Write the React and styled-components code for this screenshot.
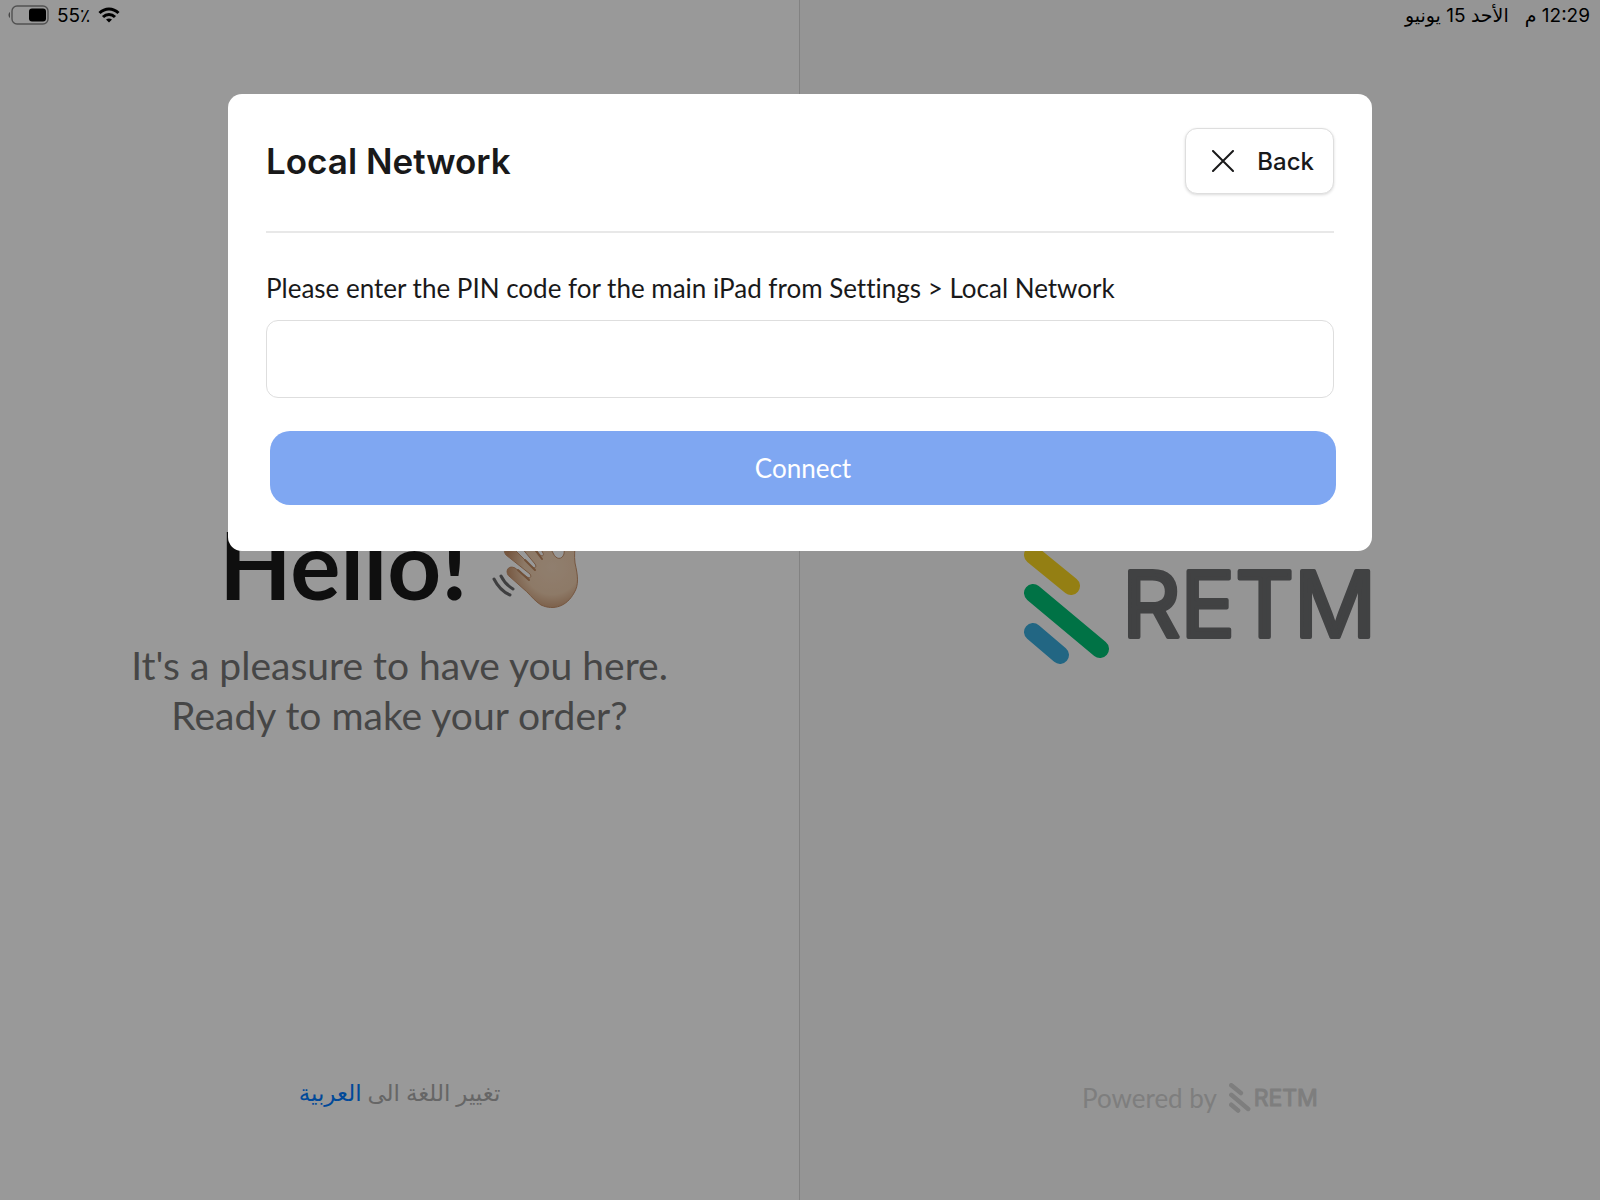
import React, { useState } from "react";
import styled, { createGlobalStyle } from "styled-components";

const GlobalStyle = createGlobalStyle`
	* {
		box-sizing: border-box;
	}
	body {
		margin: 0;
		font-family: Lato, "DejaVu Sans", sans-serif;
		font-variant-ligatures: none;
		color: #19191a;
	}
	h1, h2, p {
		margin: 0;
	}
`;

const Logo = ({ width, mono }) => (
	<svg width={width} viewBox="0 0 353 119" role="img" aria-label="RETM">
		<g fill="none" strokeWidth="18" strokeLinecap="round">
			<path d="M9 9 47 40" stroke={mono || "#f7d421"} />
			<path d="M9 47 76 103" stroke={mono || "#00bf73"} />
			<path d="M9 86 36 109" stroke={mono || "#39abdb"} />
		</g>
		<LogoName x="98" y="91" fill={mono || "#6d6e70"} stroke={mono || "#6d6e70"}>
			RETM
		</LogoName>
	</svg>
);

const WavingHand = () => (
	<svg width="88" height="90" viewBox="0 0 88 90" fill="none" strokeLinecap="round" aria-hidden="true">
		<defs>
			<radialGradient id="skin" gradientUnits="userSpaceOnUse" cx="60" cy="48" r="46">
				<stop offset="0" stopColor="#f0d3b8" />
				<stop offset="0.6" stopColor="#eccbac" />
				<stop offset="1" stopColor="#c4906a" />
			</radialGradient>
		</defs>
		<path
			d="M16 56c-3-5 1-10 7-7l12 9c3 2 5 0 3-3L14 36c-4-5 0-11 6-8l20 20c3 2 5 0 3-3L24 22c-3-6 3-11 8-7l16 21c3 2 4 0 3-2L39 13c-2-6 5-9 9-4l13 25c3 7 9 7 11 1l1-12c1-6 10-5 10 2 0 7-1 11 0 19 3 13 4 22-1 30-7 13-20 18-33 12-6-4-9-8-14-13Z"
			fill="url(#skin)"
			stroke="#c4906a"
		/>
		<path d="m26 51 11 10M33 41l10 10M41 28l9 12" stroke="#bd875f" strokeWidth="2" />
		<path d="M9 57c3 6 7 10 12 13M2 60c4 8 9 13 16 16" stroke="#69696b" strokeWidth="3" />
	</svg>
);

const App = () => {
	const [pin, setPin] = useState("");

	return (
		<Screen>
			<GlobalStyle />
			<Panels>
				<Panel>
					<Welcome>
						<Greeting>
							Hello! <WavingHand />
						</Greeting>
						<Subtitle>
							It's a pleasure to have you here.
							<br />
							Ready to make your order?
						</Subtitle>
					</Welcome>
					<Language dir="rtl">
						تغيير اللغة الى <a href="#ar">العربية</a>
					</Language>
				</Panel>
				<Panel $tinted>
					<Brand>
						<Logo width="353" />
					</Brand>
					<Powered>
						Powered by <Logo width="89" mono="#d2d2d2" />
					</Powered>
				</Panel>
			</Panels>

			<StatusBar dir="rtl">
				<StatusGroup>
					<span>12:29 م</span>
					<span>الأحد 15 يونيو</span>
				</StatusGroup>
				<StatusGroup dir="ltr" $tight>
					<svg width="41" height="20" viewBox="0 0 41 20" aria-hidden="true">
						<path d="M2 7v6C0 12 0 8 2 7Z" fill="#777" />
						<rect x="4" y="1" width="36" height="18" rx="5" fill="none" stroke="#888" strokeWidth="1.4" />
						<rect x="21" y="3.5" width="17" height="13" rx="3" fill="#000" />
					</svg>
					<span>55٪</span>
					<svg width="22" height="16" viewBox="0 0 22 16" fill="none" stroke="#000" strokeWidth="3" aria-hidden="true">
						<path d="M1.5 6C7 .5 15 .5 20.5 6" />
						<path d="M5 10c3.5-3.5 8.5-3.5 12 0" />
						<path d="m11 15.5-3-3c2-1.500 4-1.500 6 0Z" fill="#000" stroke="none" />
					</svg>
				</StatusGroup>
			</StatusBar>

			<Scrim>
				<Modal role="dialog" aria-labelledby="title">
					<ModalHeader>
						<Title id="title">Local Network</Title>
						<BackButton type="button">
							<svg width="22" height="22" viewBox="0 0 22 22" stroke="#19191a" strokeWidth="2" strokeLinecap="round" aria-hidden="true">
								<path d="m1 1 20 20M21 1 1 21" />
							</svg>
							Back
						</BackButton>
					</ModalHeader>
					<form onSubmit={(e) => e.preventDefault()}>
						<Label htmlFor="pin">Please enter the PIN code for the main iPad from Settings &gt; Local Network</Label>
						<PinInput id="pin" value={pin} onChange={(e) => setPin(e.target.value)} />
						<ConnectButton type="submit">Connect</ConnectButton>
					</form>
				</Modal>
			</Scrim>
		</Screen>
	);
};

const Screen = styled.div`
	position: relative;
	min-height: 100vh;
	display: flex;
	flex-direction: column;
	background: #fff;
`;

const StatusBar = styled.header`
	position: absolute;
	top: 0;
	left: 0;
	right: 0;
	display: flex;
	justify-content: space-between;
	align-items: center;
	height: 30px;
	padding: 0 10px 0 8px;
	font: 400 19px Inter, "DejaVu Sans", sans-serif;
	color: #000;
`;

const StatusGroup = styled.div`
	display: flex;
	align-items: center;
	gap: ${(p) => (p.$tight ? "8px" : "16px")};
`;

const Panels = styled.main`
	flex: 1;
	display: grid;
	grid-template-columns: 1fr 1fr;
`;

const Panel = styled.section`
	display: flex;
	flex-direction: column;
	align-items: center;
	padding-bottom: ${(p) => (p.$tinted ? "86px" : "92px")};
	border-right: ${(p) => (p.$tinted ? "0" : "1px solid #d9d9d9")};
	background: ${(p) => (p.$tinted ? "#f9f9f9" : "#fff")};
`;

const Welcome = styled.div`
	flex: 1;
	display: flex;
	flex-direction: column;
	justify-content: center;
	padding-top: 172px;
	text-align: center;
`;

const Greeting = styled.h1`
	display: flex;
	justify-content: center;
	align-items: center;
	gap: 24px;
	font-size: 94px;
	font-weight: 700;
	line-height: 112px;
`;

const Subtitle = styled.p`
	margin-top: 20px;
	font-size: 39px;
	line-height: 50px;
	color: #767676;
`;

const Language = styled.p`
	font-size: 23px;
	line-height: 32px;
	color: #aaa;
	a {
		color: #007aff;
		text-decoration: none;
	}
`;

const Brand = styled.div`
	flex: 1;
	display: flex;
	align-items: center;
	padding-top: 128px;
`;

const LogoName = styled.text`
	font-family: Inter, sans-serif;
	font-size: 91px;
	font-weight: 400;
	stroke-width: 4px;
	stroke-linejoin: round;
`;

const Powered = styled.div`
	display: flex;
	align-items: center;
	gap: 12px;
	font-size: 26px;
	line-height: 32px;
	color: #d2d2d2;
`;

const Scrim = styled.div`
	position: absolute;
	inset: 0;
	padding: 94px 228px 0;
	background: rgba(0, 0, 0, 0.4);
`;

const Modal = styled.div`
	padding: 34px 38px 46px;
	border-radius: 14px;
	background: #fff;
`;

const ModalHeader = styled.div`
	display: flex;
	justify-content: space-between;
	align-items: center;
	padding-bottom: 37px;
	border-bottom: 2px solid #e8e8e8;
`;

const Title = styled.h2`
	font: 600 35px Inter, sans-serif;
`;

const BackButton = styled.button`
	display: flex;
	align-items: center;
	gap: 23px;
	height: 66px;
	padding: 0 19px 0 26px;
	border: 1px solid #dedede;
	border-radius: 12px;
	background: #fff;
	box-shadow: 0 1px 3px rgba(0, 0, 0, 0.15);
	font: 500 24px Inter, sans-serif;
	color: #19191a;
`;

const Label = styled.label`
	display: block;
	margin-top: 38px;
	font-size: 26px;
	line-height: 34px;
`;

const PinInput = styled.input`
	display: block;
	width: 100%;
	height: 78px;
	margin-top: 15px;
	padding: 0 20px;
	border: 1px solid #dedede;
	border-radius: 12px;
	font-size: 26px;
	outline: none;
`;

const ConnectButton = styled.button`
	display: block;
	width: calc(100% - 2px);
	height: 74px;
	margin: 33px 0 0 4px;
	border: 0;
	border-radius: 20px;
	background: #7fa7f2;
	font: 400 26px Lato, sans-serif;
	color: #fff;
`;

export default App;
